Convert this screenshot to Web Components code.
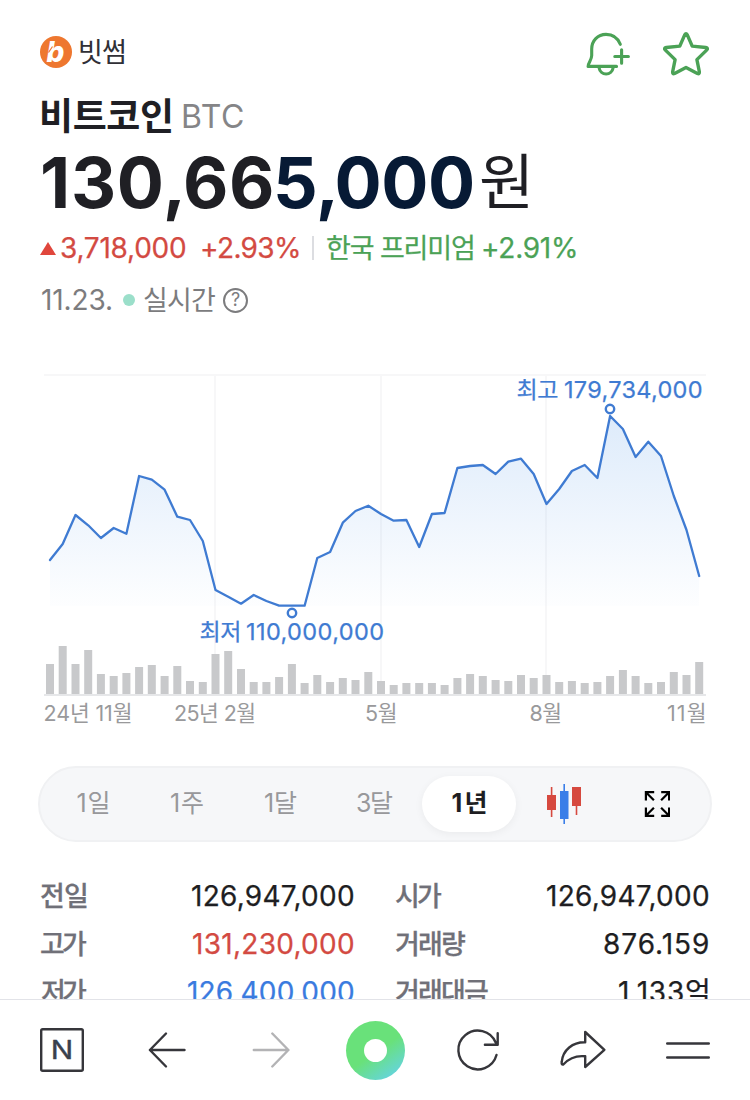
<!DOCTYPE html>
<html lang="ko">
<head>
<meta charset="utf-8">
<title>비트코인 BTC</title>
<style>
  html, body {
    margin: 0;
    background: #fff;
    font-family: Inter, "Noto Sans CJK KR", sans-serif;
    color: #1f1f24;
  }
</style>
</head>
<body>
<coin-page></coin-page>

<script>
const FONT = 'Inter, "Noto Sans CJK KR", sans-serif';
const ctx = document.createElement('canvas').getContext('2d');

// One run of text, tracked so that its ink is `fit` pixels wide
class TextRun extends HTMLElement {
  constructor() {
    super();
    this.attachShadow({ mode: 'open' });
  }

  connectedCallback() {
    const size = Number(this.getAttribute('size')) || 27;
    const weight = this.getAttribute('weight') || 400;
    const fit = Number(this.getAttribute('fit'));
    const text = this.textContent;

    ctx.font = `${weight} ${size}px ${FONT}`;
    const m = ctx.measureText(text);
    const ink = m.actualBoundingBoxRight + m.actualBoundingBoxLeft;
    const spacing = fit && text.length > 1 ? (fit - ink) / (text.length - 1) : 0;

    this.shadowRoot.innerHTML = `
      <style>
        :host {
          display: block;
          flex: none;
          width: ${fit || ink}px;
          height: 1em;
          line-height: 1em;
          font-size: ${size}px;
          font-weight: ${weight};
          white-space: nowrap;
        }
        :host([firm]) { -webkit-text-stroke: .25px currentColor; }
        span {
          display: block;
          margin-left: ${m.actualBoundingBoxLeft}px;
          letter-spacing: ${spacing}px;
        }
      </style>
      <span><slot></slot></span>
    `;
  }
}

class CoinHeader extends HTMLElement {
  constructor() {
    super();
    this.attachShadow({ mode: 'open' });
  }

  connectedCallback() {
    this.shadowRoot.innerHTML = `
      <style>
        :host { display: block; padding: 28px 40px 0; }
        .row { display: flex; align-items: center; }
        .market { height: 48px; }
        .market svg { flex: none; display: block; }
        .market text-run { margin-left: 8px; color: #303036; }
        .actions { display: flex; gap: 28px; margin: 0 -2px 0 auto; }
        .title { height: 40px; margin-top: 20px; padding-left: 2px; gap: 11px; }
        .code { margin: 2px 0 0 1px; color: #858587; }
        .price { height: 80px; margin-top: 7px; padding-left: 3px; }
        .price i { font-style: normal; margin-right: -4px; }
        .tail { color: #071a35; margin-left: 3px; }
        .won { margin: -3px 0 0 7px; }
        .change { height: 36px; margin-top: 7px; color: #d34a42; }
        .up {
          border: 8px solid transparent;
          border-top: 0;
          border-bottom: 13px solid #e0463c;
        }
        .divider { width: 2px; height: 24px; margin: 0 12px 0 13px; background: #dcdde1; }
        .green { color: #4ba256; }
        .time { height: 36px; margin-top: 16px; padding-left: 2px; color: #7c7c7e; }
        .dot { width: 12px; height: 12px; margin: 0 9px 0 12px; border-radius: 50%; background: #9bdfca; }
        .help {
          box-sizing: border-box;
          display: grid;
          place-items: center;
          width: 25px;
          height: 25px;
          margin-left: 8px;
          border: 2px solid #7c7c7e;
          border-radius: 50%;
          font: 400 18px/1 Inter, sans-serif;
        }
      </style>
      <div class="row market">
        <svg width="32" height="32" viewBox="0 0 32 32">
          <circle cx="16" cy="16" r="16" fill="#ee772f"/>
          <text x="6.500" y="26.300" font-family="Inter" font-size="28" font-weight="800" font-style="italic" fill="#fff">b</text>
          <path d="M8.500 16.500l4-6" stroke="#ee772f" stroke-width="1.200"/>
        </svg>
        <text-run size="27" fit="44">빗썸</text-run>
        <div class="actions">
          <svg width="48" height="48" viewBox="584 28 48 48" fill="none" stroke="#4ba256" stroke-width="3.1" stroke-linecap="round" stroke-linejoin="round">
            <path d="M620.3 44.3C617.8 38 612.3 34.4 606 34.4c-8.3 0-14.3 6.4-14.3 14.6v6.6c0 4.4-3.6 7-3.6 10.8h28.4"/>
            <path d="M599.2 68.3c.6 3.4 3.4 5.7 6.9 5.7s6.300-2.300 6.900-5.700"/>
            <path d="M614.800 56.500h13.600M621.600 49.700v13.600"/>
          </svg>
          <svg width="52" height="48" viewBox="660 28 52 48" fill="none" stroke="#4ba256" stroke-width="3.4" stroke-linejoin="round">
            <path d="M684.700 34.900Q686 32.600 687.300 34.900L692.200 46.100 705.800 47.500Q708.600 48 706.600 50.100L696.900 59.600 699.400 72Q699.600 74.400 697.400 73.400L686 67.400 674.600 73.400Q672.400 74.400 672.600 72L675.100 59.600 665.400 50.100Q663.400 48 666.200 47.500L679.800 46.100Z"/>
          </svg>
        </div>
      </div>
      <div class="row title">
        <text-run size="37" weight="700" fit="129">비트코인</text-run>
        <text-run class="code" size="32" fit="60">BTC</text-run>
      </div>
      <div class="row price">
        <text-run size="70" weight="700" fit="231">130<i>,</i>66</text-run>
        <text-run class="tail" size="70" weight="700" fit="197">5<i>,</i>000</text-run>
        <text-run class="won" size="60" fit="50">원</text-run>
      </div>
      <div class="row change">
        <span class="up"></span>
        <text-run firm style="margin-left: 5px" size="28" fit="124">3,718,000</text-run>
        <text-run firm style="margin-left: 17px" size="28" fit="97">+2.93%</text-run>
        <span class="divider"></span>
        <text-run firm class="green" style="margin-left: 1px" fit="146">한국 프리미엄</text-run>
        <text-run firm class="green" style="margin-left: 10px" size="28" fit="93">+2.91%</text-run>
      </div>
      <div class="row time">
        <text-run size="28" fit="69">11.23.</text-run>
        <span class="dot"></span>
        <text-run fit="71">실시간</text-run>
        <span class="help">?</span>
      </div>
    `;
  }
}

class PriceChart extends HTMLElement {
  constructor() {
    super();
    this.attachShadow({ mode: 'open' });
    this._prices = [
      560, 544, 515, 525.3, 538, 528, 533.7, 476, 479.7, 489.7, 516.7, 520, 541,
      590, 596.7, 603.7, 595, 601, 605.7, 605.7, 605.7, 558, 552, 522.7, 511, 505.7,
      514, 520.7, 520, 547, 514, 513, 468, 466, 465, 474, 461.7, 458.7, 474,
      504, 489, 471, 465, 478, 416, 429, 457, 441.7, 456, 496, 530, 576
    ];
    this._volumes = [
      30, 48, 30, 44, 20, 18, 21, 27, 29, 18, 28, 13, 12,
      40, 43, 25, 12, 12, 17, 30, 11, 19, 12, 16, 14, 22,
      13, 9, 11, 11, 11, 9, 16, 20, 18, 14, 13, 19, 16,
      19, 12, 13, 11, 12, 18, 24, 18, 11, 12, 22, 19, 32
    ];
  }

  connectedCallback() {
    const x = i => (50 + i * 12.73).toFixed(1);
    const line = this._prices.map((y, i) => `${x(i)},${y}`).join(' ');
    const bars = this._volumes.map((h, i) =>
      `<rect x="${(x(i) - 4).toFixed(1)}" y="${694 - h}" width="8" height="${h}"/>`
    ).join('');

    this.shadowRoot.innerHTML = `
      <style>
        :host { display: block; margin-top: 42px; }
        svg { display: block; }
        text { font-family: Inter, "Noto Sans CJK KR", sans-serif; }
      </style>
      <svg width="750" height="380" viewBox="0 360 750 380">
        <defs>
          <linearGradient id="area" gradientUnits="userSpaceOnUse" x1="0" y1="416" x2="0" y2="606">
            <stop offset="0" stop-color="#3b8ae6" stop-opacity=".17"/>
            <stop offset="1" stop-color="#3b8ae6" stop-opacity=".01"/>
          </linearGradient>
        </defs>
        <path d="M44 375H706M215 375V694M381 375V694M546 375V694" stroke="#f7f7f8" stroke-width="2"/>
        <polygon points="50,606 ${line} 699,606" fill="url(#area)"/>
        <path d="M44 695H706" stroke="#e6e7e9" stroke-width="2"/>
        <g fill="#c8c9cb">${bars}</g>
        <polyline points="${line}" fill="none" stroke="#3f7bd2" stroke-width="2.3" stroke-linejoin="round" stroke-linecap="round"/>
        <g fill="#fff" stroke="#3f7bd2" stroke-width="2.4">
          <circle cx="610" cy="409" r="4.2"/>
          <circle cx="292" cy="613" r="4.2"/>
        </g>
        <g fill="#3f7bd2" font-size="23.500" stroke="#3f7bd2" stroke-width=".25">
          <text x="516.500" y="397.500" font-size="23" textLength="42">최고</text>
          <text x="564" y="398" textLength="138.500">179,734,000</text>
          <text x="199.500" y="640" font-size="23" textLength="42">최저</text>
          <text x="246" y="640" textLength="138">110,000,000</text>
        </g>
        <g fill="#99999b" font-size="21.500">
          <text x="43.500" y="721" textLength="89">24년 11월</text>
          <text x="174" y="721" textLength="82">25년 2월</text>
          <text x="365" y="721" textLength="32.500">5월</text>
          <text x="529.500" y="721" textLength="32.500">8월</text>
          <text x="667" y="721" textLength="39.500">11월</text>
        </g>
      </svg>
    `;
  }
}

class PeriodTabs extends HTMLElement {
  constructor() {
    super();
    this.attachShadow({ mode: 'open' });
  }

  connectedCallback() {
    const tabs = [['1일', 31], ['1주', 32], ['1달', 32], ['3달', 36], ['1년', 33]];
    const active = this.getAttribute('active');
    const tabsHtml = tabs.map(([label, fit]) => {
      const on = label === active;
      return `<div class="tab ${on ? 'on' : ''}">
        <text-run size="25" weight="${on ? 700 : 400}" fit="${fit}">${label}</text-run>
      </div>`;
    }).join('');

    this.shadowRoot.innerHTML = `
      <style>
        :host {
          box-sizing: border-box;
          display: flex;
          align-items: center;
          height: 76px;
          margin: 26px 38px 0;
          padding: 0 6px;
          border: 2px solid #f0f1f3;
          border-radius: 38px;
          background: #f6f7f9;
        }
        .tab {
          flex: 1;
          display: flex;
          align-items: center;
          justify-content: center;
          height: 56px;
          color: #98989b;
        }
        text-run { margin-top: -2px; }
        .on {
          border-radius: 28px;
          background: #fff;
          color: #1e1e22;
          box-shadow: 0 2px 8px rgba(0, 0, 0, .05);
        }
        svg { display: block; }
      </style>
      ${tabsHtml}
      <div class="tab">
        <svg width="34" height="40" viewBox="546 784 34 40" overflow="visible">
          <path d="M547 795h9v15h-9zM572 787h9v19h-9zM550.800 787h1.600v30h-1.600zM575.700 787h1.600v28h-1.600z" fill="#d6493f"/>
          <path d="M560 791h8.500v28H560zM563.400 784h1.600v40h-1.600z" fill="#3a7ee8"/>
        </svg>
      </div>
      <div class="tab">
        <svg width="26" height="26" viewBox="-.7 0 26 26" fill="none" stroke="#000" stroke-width="2.200">
          <path d="M1.200 9.500V1.200H9.500M1.200 1.200l8 8"/>
          <path d="M16.500 1.200h7.900V9.500M24.400 1.200l-8 8"/>
          <path d="M1.200 16.500v8.300H9.500M1.200 24.800l8-8"/>
          <path d="M16.500 24.800h7.900V16.500M24.400 24.800l-8-8"/>
        </svg>
      </div>
    `;
  }
}

class QuoteStats extends HTMLElement {
  constructor() {
    super();
    this.attachShadow({ mode: 'open' });
  }

  connectedCallback() {
    // label, label width, value, value width, colour
    const stats = [
      ['전일', 46, '126,947,000', 161, '#1e1e22'],
      ['시가', 46, '126,947,000', 161, '#1e1e22'],
      ['고가', 46, '131,230,000', 160, '#d34a42'],
      ['거래량', 69, '876.159', 104, '#1e1e22'],
      ['저가', 46, '126,400,000', 165, '#3a7bdf'],
      ['거래대금', 92, '1,133억', 89, '#1e1e22']
    ];
    this.shadowRoot.innerHTML = `
      <style>
        :host {
          display: grid;
          grid-template-columns: 314px 314px;
          column-gap: 41px;
          grid-auto-rows: 48px;
          margin: 30px 40px 0;
        }
        .stat { display: flex; align-items: center; justify-content: space-between; padding: 0 1px; }
        .label { color: #707078; }
      </style>
      ${stats.map(([label, lw, value, vw, color]) => `
        <div class="stat">
          <text-run firm class="label" weight="500" fit="${lw}">${label}</text-run>
          <text-run firm style="color: ${color}" size="28" fit="${vw}">${value}</text-run>
        </div>`).join('')}
    `;
  }
}

class BrowserBar extends HTMLElement {
  constructor() {
    super();
    this.attachShadow({ mode: 'open' });
  }

  connectedCallback() {
    this.shadowRoot.innerHTML = `
      <style>
        :host {
          box-sizing: border-box;
          display: flex;
          flex: none;
          justify-content: space-between;
          height: 101px;
          padding: 28px 40px 0;
          border-top: 1px solid #e2e3e8;
          background: #fff;
        }
        svg {
          display: block;
          overflow: visible;
          fill: none;
          stroke: #36363b;
          stroke-width: 2.400;
          stroke-linecap: round;
          stroke-linejoin: round;
        }
      </style>
      <svg width="44" height="44" viewBox="0 0 44 44">
        <rect x="1.200" y="1.200" width="41.600" height="41.600" rx="1.500"/>
        <text x="10.800" y="31.200" font-family="Inter" font-size="26" font-weight="400" textLength="22.500" lengthAdjust="spacingAndGlyphs" fill="#39414c" stroke="#39414c" style="stroke-width: .4">N</text>
      </svg>
      <svg width="44" height="44" viewBox="144.300 1028 44 44">
        <path d="M166.300 1033.500L150.200 1050l16.100 16.500M150.200 1050h34.600"/>
      </svg>
      <svg width="44" height="44" viewBox="249.700 1028 44 44" style="stroke: #b3b3b5">
        <path d="M273 1033.500l16.100 16.500-16.100 16.500M289.100 1050h-34.600"/>
      </svg>
      <svg width="44" height="44" viewBox="353 1028 44 44">
        <defs>
          <linearGradient id="ring" x1=".3" y1=".2" x2=".85" y2="1">
            <stop offset=".4" stop-color="#69e17a"/>
            <stop offset=".9" stop-color="#65d5d8"/>
          </linearGradient>
        </defs>
        <circle cx="375.500" cy="1050.500" r="29.500" fill="url(#ring)" stroke="none"/>
        <circle cx="375.500" cy="1050.500" r="11.500" fill="#fff" stroke="none"/>
      </svg>
      <svg width="44" height="44" viewBox="457.300 1028 44 44">
        <path d="M496.800 1055A19.400 19.400 0 1 1 496 1042.500M498 1033.200v11.600h-12.800"/>
      </svg>
      <svg width="44" height="44" viewBox="562.200 1028 44 44">
        <path d="M585.400 1032L604.600 1049.800 585.400 1067V1056.300C576 1055.300 569.500 1058 563.500 1064.500Q561.500 1065 561.900 1062C563 1050 573 1042 585.400 1042.300Z"/>
      </svg>
      <svg width="44" height="44" viewBox="666 1028 44 44">
        <path d="M667.200 1043.500h41.600M667.200 1057.500h41.600"/>
      </svg>
    `;
  }
}

class CoinPage extends HTMLElement {
  constructor() {
    super();
    this.attachShadow({ mode: 'open' });
    this.shadowRoot.innerHTML = `
      <style>
        :host {
          display: flex;
          flex-direction: column;
          width: 750px;
          height: 1100px;
          overflow: hidden;
        }
        main { flex: 1; min-height: 0; overflow: hidden; }
      </style>
      <main>
        <coin-header></coin-header>
        <price-chart></price-chart>
        <period-tabs active="1년"></period-tabs>
        <quote-stats></quote-stats>
      </main>
      <browser-bar></browser-bar>
    `;
  }
}

customElements.define('text-run', TextRun);
customElements.define('coin-header', CoinHeader);
customElements.define('price-chart', PriceChart);
customElements.define('period-tabs', PeriodTabs);
customElements.define('quote-stats', QuoteStats);
customElements.define('browser-bar', BrowserBar);
customElements.define('coin-page', CoinPage);
</script>
</body>
</html>
